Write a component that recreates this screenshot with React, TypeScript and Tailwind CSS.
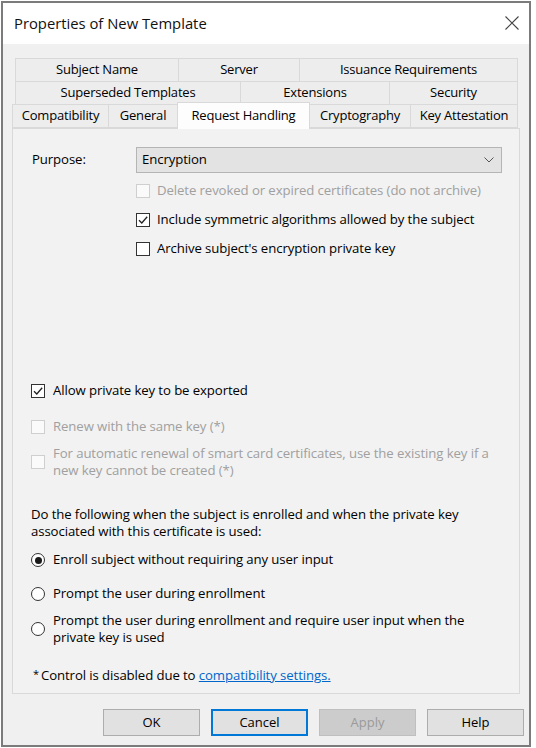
import React from "react";

const font = { fontFamily: '"Open Sans", "Noto Sans", sans-serif' };

type TabProps = { label: string; w: string; active?: boolean };

const Tab = ({ label, w, active }: TabProps) =>
  active ? (
    <div
      className={`${w} relative z-10 -mt-[2px] -mb-[1px] -ml-px flex items-center justify-center border border-b-0 border-[#d9d9d9] bg-[#fdfdfd] text-[13px] tracking-[-0.2px] text-black`}
    >
      {label}
    </div>
  ) : (
    <div
      className={`${w} -ml-px flex items-center justify-center border border-[#d9d9d9] bg-[#ededed] text-[13px] tracking-[-0.2px] text-black first:ml-0`}
    >
      {label}
    </div>
  );

const CheckBox = ({ checked, disabled }: { checked?: boolean; disabled?: boolean }) => (
  <span
    className={`flex h-[14px] w-[14px] shrink-0 items-center justify-center border ${
      disabled ? "border-[#cfcfcf] bg-[#fafafa]" : "border-[#333333] bg-white"
    }`}
  >
    {checked && (
      <svg width="12" height="12" viewBox="0 0 12 12">
        <polyline points="2,6.2 4.8,9 10.2,2.8" fill="none" stroke="#222" strokeWidth="1.3" />
      </svg>
    )}
  </span>
);

const Radio = ({ checked }: { checked?: boolean }) => (
  <span className="flex h-[14px] w-[14px] shrink-0 items-center justify-center rounded-full border border-[#333333] bg-white">
    {checked && <span className="h-[7px] w-[7px] rounded-full bg-[#1a1a1a]" />}
  </span>
);

const Btn = ({ label, kind }: { label: string; kind?: "focus" | "disabled" }) => {
  const cls =
    kind === "focus"
      ? "border-2 border-[#0078d7] bg-[#e1e1e1] text-black"
      : kind === "disabled"
      ? "border border-[#bfbfbf] bg-[#cccccc] text-[#9a9a9a]"
      : "border border-[#adadad] bg-[#e1e1e1] text-black";
  return (
    <div className={`flex h-[27px] w-[97px] shrink-0 items-center justify-center text-[13px] ${cls}`}>
      {label}
    </div>
  );
};

export default function App() {
  return (
    <div className="h-[748px] w-[536px] bg-white pl-[1px] pt-[1px]" style={font}>
      <div className="flex h-[746px] w-[530px] flex-col border-2 border-[#7b7b7b]">
        {/* title bar */}
        <div className="flex h-[41px] items-center justify-between bg-white pl-[11px] pr-[10px]">
          <span className="text-[14.8px] text-[#111]">Properties of New Template</span>
          <svg width="14" height="14" viewBox="0 0 14 14" className="mb-[2px]">
            <path d="M0.5 0.5 L13.5 13.5 M13.5 0.5 L0.5 13.5" stroke="#444" strokeWidth="1.1" />
          </svg>
        </div>

        {/* body */}
        <div className="flex flex-1 flex-col bg-[#f0f0f0] px-[9px] pt-[14px]">
          {/* tabs */}
          <div className="flex h-[24px] pl-[3px] pr-[2px]">
            <Tab label="Subject Name" w="w-[164px]" />
            <Tab label="Server" w="w-[122px]" />
            <Tab label="Issuance Requirements" w="flex-1" />
          </div>
          <div className="-mt-px flex h-[24px] pl-[3px] pr-[2px]">
            <Tab label="Superseded Templates" w="w-[226px]" />
            <Tab label="Extensions" w="w-[150px]" />
            <Tab label="Security" w="flex-1" />
          </div>
          <div className="-mt-px flex h-[24px] pr-[2px]">
            <Tab label="Compatibility" w="w-[97px]" />
            <Tab label="General" w="w-[70px]" />
            <Tab label="Request Handling" w="w-[133px]" active />
            <Tab label="Cryptography" w="w-[102px]" />
            <Tab label="Key Attestation" w="flex-1" />
          </div>

          {/* panel */}
          <div className="flex h-[566px] flex-col border border-[#d9d9d9] bg-[#f2f2f2] pl-[18px] pt-[18px] text-[13.2px] tracking-[-0.1px] text-black">
            <div className="flex h-[26px] items-center">
              <span className="w-[105px] pl-[1px]">Purpose:</span>
              <div className="flex h-[26px] w-[366px] items-center justify-between border border-[#b5b5b5] bg-[#e3e3e3] pl-[5px] pr-[7px]">
                <span>Encryption</span>
                <svg width="10" height="6" viewBox="0 0 10 6">
                  <polyline points="0.5,0.5 5,5 9.5,0.5" fill="none" stroke="#555" strokeWidth="1" />
                </svg>
              </div>
            </div>

            <div className="ml-[105px] mt-[8px] flex h-[20px] items-center gap-[7px] text-[#a0a0a0]">
              <CheckBox disabled />
              <span>Delete revoked or expired certificates (do not archive)</span>
            </div>
            <div className="ml-[105px] mt-[9px] flex h-[20px] items-center gap-[7px]">
              <CheckBox checked />
              <span>Include symmetric algorithms allowed by the subject</span>
            </div>
            <div className="ml-[105px] mt-[9px] flex h-[20px] items-center gap-[7px]">
              <CheckBox />
              <span>Archive subject's encryption private key</span>
            </div>

            <div className="mt-[122px] flex h-[20px] items-center gap-[8px]">
              <CheckBox checked />
              <span>Allow private key to be exported</span>
            </div>
            <div className="mt-[16px] flex h-[20px] items-center gap-[8px] text-[#a0a0a0]">
              <CheckBox disabled />
              <span>Renew with the same key (*)</span>
            </div>
            <div className="mt-[8px] flex items-center gap-[8px] leading-[17px] text-[#a0a0a0]">
              <CheckBox disabled />
              <span>
                For automatic renewal of smart card certificates, use the existing key if a
                <br />
                new key cannot be created (*)
              </span>
            </div>

            <p className="mt-[27px] leading-[17px]">
              Do the following when the subject is enrolled and when the private key
              <br />
              associated with this certificate is used:
            </p>
            <div className="mt-[10px] flex h-[20px] items-center gap-[8px]">
              <Radio checked />
              <span>Enroll subject without requiring any user input</span>
            </div>
            <div className="mt-[14px] flex h-[20px] items-center gap-[8px]">
              <Radio />
              <span>Prompt the user during enrollment</span>
            </div>
            <div className="mt-[8px] flex items-center gap-[8px] leading-[17px]">
              <Radio />
              <span>
                Prompt the user during enrollment and require user input when the
                <br />
                private key is used
              </span>
            </div>

            <div className="mt-[20px] flex h-[20px] items-center pl-[2px]">
              <span className="mb-[5px] mr-[2px] text-[11px] leading-none">*</span>
              <span>Control is disabled due to&nbsp;</span>
              <span className="text-[#0066cc] underline">compatibility settings.</span>
            </div>
          </div>

          {/* buttons */}
          <div className="mt-[15px] flex gap-[11px] pl-[91px]">
            <Btn label="OK" />
            <Btn label="Cancel" kind="focus" />
            <Btn label="Apply" kind="disabled" />
            <Btn label="Help" />
          </div>
        </div>
      </div>
    </div>
  );
}
